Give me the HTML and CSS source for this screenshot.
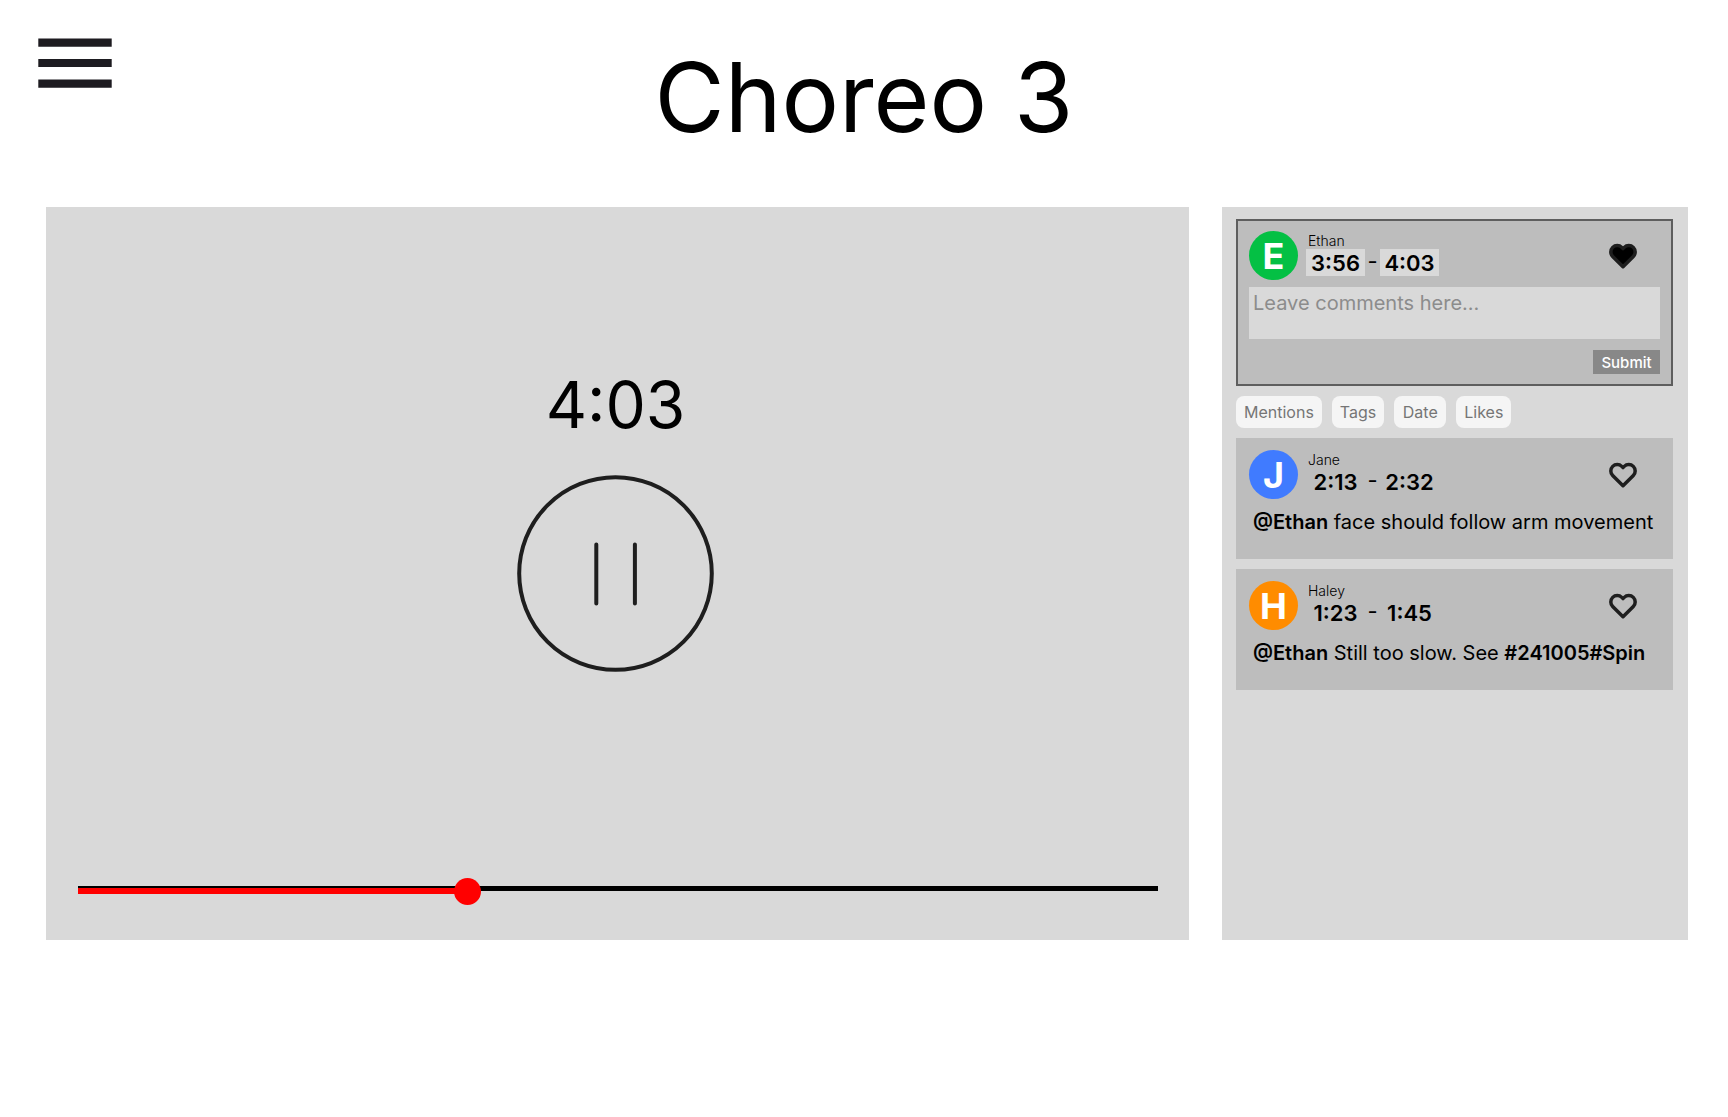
FILE: index.html
```html
<!DOCTYPE html>
<html lang="en">
<head>
  <meta charset="utf-8">
  <meta name="viewport" content="width=device-width, initial-scale=1">
  <title>Choreo 3</title>
  <link rel="stylesheet" href="styles.css">
</head>
<body>
  <header class="topbar">
    <button class="icon-button menu" type="button" aria-label="Menu">
      <svg width="74" height="50" viewBox="0 0 74 50" fill="#1d1b20" aria-hidden="true">
        <path d="M.3.4h73.4v8.3H.3zM.3 20.9h73.4v8.2H.3zM.3 41.4h73.4v8.3H.3z"/>
      </svg>
    </button>
    <h1 class="title">Choreo 3</h1>
  </header>

  <main class="workspace">
    <section class="player" aria-label="Video player">
      <div class="playback">
        <div class="clock">4:03</div>
        <button class="icon-button pause" type="button" aria-label="Pause">
          <svg width="197" height="197" viewBox="0 0 197 197" fill="none" stroke="#1e1e1e" stroke-width="4" stroke-linecap="round" aria-hidden="true">
            <circle cx="98.5" cy="98.5" r="96.3"/>
            <path d="M79.3 69.5v59M117.9 69.5v59"/>
          </svg>
        </button>
      </div>
      <div class="timeline">
        <input class="seek" type="range" min="0" max="680" value="243" aria-label="Seek">
      </div>
    </section>

    <aside class="comments" aria-label="Comments">
      <form class="card composer">
        <div class="card-head">
          <span class="avatar green">E</span>
          <div class="meta">
            <span class="name">Ethan</span>
            <div class="range">
              <input class="time" type="text" value="3:56" aria-label="Start time">
              <span class="dash">-</span>
              <input class="time" type="text" value="4:03" aria-label="End time">
            </div>
          </div>
          <button class="icon-button like liked" type="button" aria-label="Like">
            <svg width="28" height="28" viewBox="0 0 24 24" aria-hidden="true"><path d="M20.84 4.61a5.5 5.5 0 0 0-7.78 0L12 5.67l-1.06-1.06a5.5 5.5 0 0 0-7.78 7.78l1.06 1.06L12 21.23l7.78-7.78 1.06-1.06a5.5 5.5 0 0 0 0-7.78z"/></svg>
          </button>
        </div>
        <textarea class="comment-box" placeholder="Leave comments here..." aria-label="Comment"></textarea>
        <button class="submit" type="button">Submit</button>
      </form>

      <div class="filters">
        <button class="chip" type="button">Mentions</button>
        <button class="chip" type="button">Tags</button>
        <button class="chip" type="button">Date</button>
        <button class="chip" type="button">Likes</button>
      </div>

      <article class="card">
        <div class="card-head">
          <span class="avatar blue">J</span>
          <div class="meta">
            <span class="name">Jane</span>
            <div class="range">
              <span class="time">2:13</span>
              <span class="dash">-</span>
              <span class="time">2:32</span>
            </div>
          </div>
          <button class="icon-button like" type="button" aria-label="Like">
            <svg width="28" height="28" viewBox="0 0 24 24" aria-hidden="true"><path d="M20.84 4.61a5.5 5.5 0 0 0-7.78 0L12 5.67l-1.06-1.06a5.5 5.5 0 0 0-7.78 7.78l1.06 1.06L12 21.23l7.78-7.78 1.06-1.06a5.5 5.5 0 0 0 0-7.78z"/></svg>
          </button>
        </div>
        <p class="text"><b>@Ethan</b> face should follow arm movement</p>
      </article>

      <article class="card">
        <div class="card-head">
          <span class="avatar orange">H</span>
          <div class="meta">
            <span class="name">Haley</span>
            <div class="range">
              <span class="time">1:23</span>
              <span class="dash">-</span>
              <span class="time">1:45</span>
            </div>
          </div>
          <button class="icon-button like" type="button" aria-label="Like">
            <svg width="28" height="28" viewBox="0 0 24 24" aria-hidden="true"><path d="M20.84 4.61a5.5 5.5 0 0 0-7.78 0L12 5.67l-1.06-1.06a5.5 5.5 0 0 0-7.78 7.78l1.06 1.06L12 21.23l7.78-7.78 1.06-1.06a5.5 5.5 0 0 0 0-7.78z"/></svg>
          </button>
        </div>
        <p class="text"><b>@Ethan</b> Still too slow. See <b>#241005#Spin</b></p>
      </article>
    </aside>
  </main>
</body>
</html>
```
FILE: styles.css
```css
* {
  box-sizing: border-box;
}

body {
  margin: 0;
  background: #fff;
  color: #000;
  font-family: Inter, "Liberation Sans", sans-serif;
}

button,
input,
textarea {
  margin: 0;
  padding: 0;
  border: 0;
  border-radius: 0;
  font: inherit;
  color: inherit;
}

.icon-button {
  background: none;
  cursor: pointer;
}

.icon-button svg {
  display: block;
}

/* Header */

.topbar {
  display: grid;
  grid-template-columns: 1fr auto 1fr;
  align-items: start;
  padding: 38px 38px 50px;
}

.menu {
  justify-self: start;
}

.title {
  margin: 0;
  font-size: 96px;
  line-height: 119px;
  font-weight: 400;
}

/* Main area */

.workspace {
  display: grid;
  grid-template-columns: 1fr 466px;
  gap: 33px;
  min-height: 733px;
  padding: 0 40px 0 46px;
}

.player {
  display: flex;
  flex-direction: column;
  justify-content: space-between;
  background: #d9d9d9;
}

.playback {
  display: flex;
  flex-direction: column;
  align-items: center;
  gap: 32px;
  padding: 159px 36px 0 32px;
}

.clock {
  font-size: 64px;
  line-height: 77px;
}

.timeline {
  display: flex;
  padding: 0 31px 35px 32px;
}

.seek {
  appearance: none;
  width: 100%;
  height: 27px;
  background:
    linear-gradient(#f00, #f00) 0 10px / 36% 6px no-repeat,
    linear-gradient(#000, #000) 0 8px / 100% 5px no-repeat;
}

.seek::-webkit-slider-thumb {
  appearance: none;
  width: 27px;
  height: 27px;
  border-radius: 50%;
  background: #f00;
}

/* Comments */

.comments {
  display: flex;
  flex-direction: column;
  gap: 10px;
  padding: 12px 15px 12px 14px;
  background: #d9d9d9;
}

.card {
  padding: 12px 13px 25px;
  background: #bdbdbd;
}

.composer {
  display: flex;
  flex-direction: column;
  padding: 10px 11px;
  border: 2px solid #5e5e5e;
}

.card-head {
  display: flex;
  align-items: flex-start;
  gap: 8px;
  padding-right: 23px;
}

.avatar {
  width: 49px;
  height: 49px;
  border-radius: 50%;
  color: #fff;
  font-size: 36px;
  line-height: 50px;
  font-weight: 700;
  text-align: center;
}

.green {
  background: #04c044;
}

.blue {
  background: #407bff;
}

.orange {
  background: #ff8c00;
}

.meta {
  flex: 1;
  padding-top: 1px;
}

.name {
  display: block;
  padding-left: 2px;
  font-size: 14px;
  line-height: 17px;
  font-weight: 300;
}

.range {
  display: flex;
  font-size: 22px;
  line-height: 25px;
}

.time {
  width: 59px;
  height: 27px;
  padding-top: 2px;
  font-weight: 600;
  text-align: center;
}

input.time {
  padding-top: 1px;
  background: #d9d9d9;
}

.dash {
  width: 15px;
  text-align: center;
}

.like {
  align-self: center;
}

.like svg {
  fill: none;
  stroke: #1e1e1e;
  stroke-width: 3;
  stroke-linecap: round;
  stroke-linejoin: round;
}

.liked svg {
  fill: #000;
}

.comment-box {
  width: 100%;
  height: 52px;
  margin: 7px 0 11px;
  padding: 4px;
  background: #d9d9d9;
  font-size: 20px;
  line-height: 24px;
  resize: none;
}

.comment-box::placeholder {
  color: #8c8c8c;
}

.submit {
  align-self: flex-end;
  min-width: 67px;
  height: 24px;
  padding: 0 8px;
  background: #888;
  color: #fff;
  font-size: 15px;
  font-weight: 500;
}

.filters {
  display: flex;
  gap: 10px;
}

.chip {
  min-width: 52px;
  height: 32px;
  padding: 0 8px;
  border-radius: 8px;
  background: #f5f5f5;
  color: #757575;
  font-size: 16px;
}

.text {
  margin: 11px 0 0;
  padding-left: 4px;
  font-size: 20px;
  line-height: 24px;
  white-space: nowrap;
}

.text b {
  font-weight: 600;
}
```
